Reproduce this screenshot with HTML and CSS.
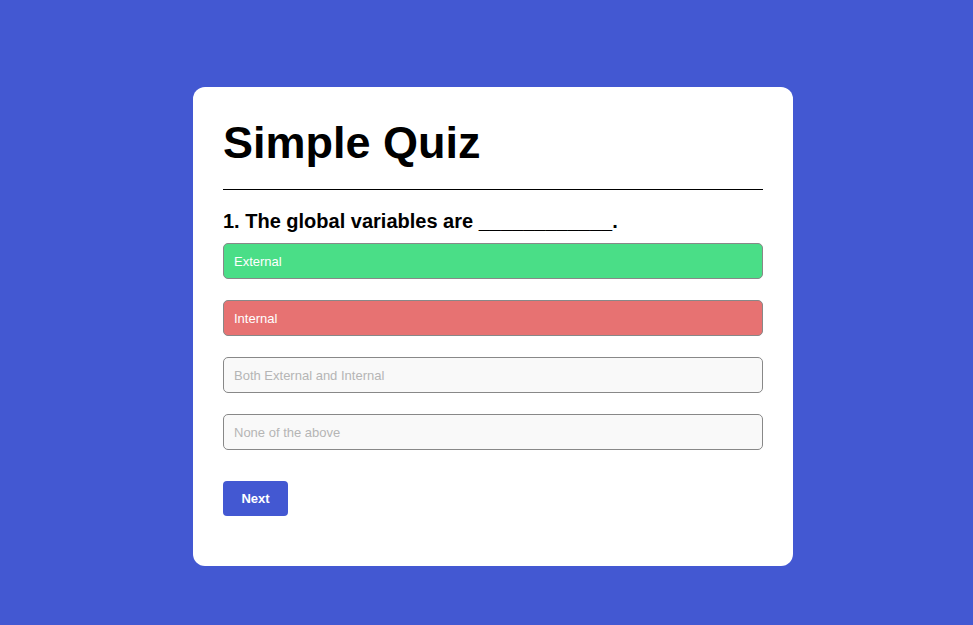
FILE: index.html
```html
<!DOCTYPE html>
<html lang="en">
<head>
<meta charset="utf-8">
<title>Simple Quiz</title>
<link rel="stylesheet" href="styles.css">
</head>
<body>
<div class="app">
  <h1 class="title">Simple Quiz</h1>
  <div class="quiz">
    <h2 class="question">1. The global variables are ____________.</h2>
    <div class="answers">
      <button class="answer correct">External</button>
      <button class="answer incorrect">Internal</button>
      <button class="answer" disabled>Both External and Internal</button>
      <button class="answer" disabled>None of the above</button>
    </div>
    <button class="next">Next</button>
  </div>
</div>
</body>
</html>
```
FILE: styles.css
```css
* { box-sizing: border-box; }
html, body { margin: 0; padding: 0; }
body {
  background: #4358d2;
  font-family: "Liberation Sans", Arial, sans-serif;
  height: 625px;
  overflow: hidden;
}
.app {
  width: 600px;
  margin: 87px 0 0 193px;
  background: #fff;
  border-radius: 12px;
  padding: 30px 30px 50px;
}
.title {
  margin: 0;
  font-size: 45px;
  font-weight: bold;
  color: #000;
  line-height: 52px;
  padding-bottom: 20px;
  border-bottom: 1px solid #000;
}
.question {
  margin: 20px 0 10px;
  font-size: 20px;
  line-height: 23px;
  font-weight: bold;
  color: #000;
}
.answers {
  display: flex;
  flex-direction: column;
  gap: 21px;
}
.answer {
  display: block;
  width: 100%;
  height: 36px;
  padding: 0 10px;
  text-align: left;
  font-family: "Liberation Sans", Arial, sans-serif;
  font-size: 13px;
  border: 1px solid #888;
  border-radius: 5px;
  background: #f9f9f9;
  color: #b5b5b5;
}
.answer.correct { background: #4ade87; color: #fff; }
.answer.incorrect { background: #e77272; color: #fff; }
.next {
  display: block;
  margin-top: 31px;
  width: 65px;
  height: 35px;
  border: 0;
  border-radius: 4px;
  background: #4358d2;
  color: #fff;
  font-family: "Liberation Sans", Arial, sans-serif;
  font-size: 13px;
  font-weight: bold;
}
```
